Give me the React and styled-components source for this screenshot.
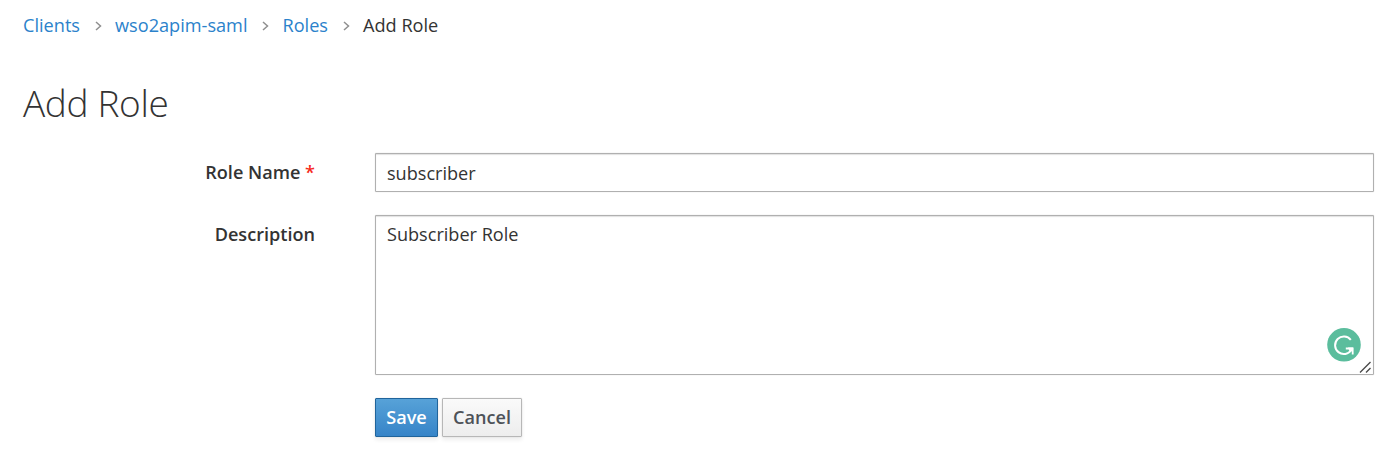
import React from 'react';
import styled, { createGlobalStyle } from 'styled-components';

const GlobalStyle = createGlobalStyle`
  * { box-sizing: border-box; }
  body { margin: 0; background: #fff; color: #333; font-family: "Open Sans", "Noto Sans", sans-serif; font-size: 18.1px; line-height: 26px; }
`;
const Page = styled.main`padding: 12px 26px 0 23px; height: 461px; overflow: hidden;`;
const Breadcrumb = styled.nav`display: flex; align-items: center; height: 26px; font-size: 18.15px; white-space: nowrap;`;
const Crumb = styled.a`color: #2b82cb; text-decoration: none;`;
const Current = styled.span`color: #333;`;
const Chevron = styled.svg`width: 7px; height: 10px; margin: 2px 13.5px 0 14.5px; flex: none;`;
const Title = styled.h1`margin: 39px 0 25px; font-size: 37px; line-height: 51px; font-weight: 300; letter-spacing: -.35px; color: #333;`;
const Row = styled.div`display: grid; grid-template-columns: 292px 999px; column-gap: 60px; margin-bottom: ${p => p.$gap || 0}px;`;
const Label = styled.label`text-align: right; font-weight: 600; padding-top: 6px;`;
const Required = styled.span`color: #f62a1d;`;
const field = `
  display: block; width: 999px; border: 1px solid #b0b0b0; border-radius: 1px; outline: 0; background: #fff;
  box-shadow: inset 0 1px 1px rgba(0,0,0,.12), 0 0 1px rgba(0,0,0,.25); font: inherit; color: #333;
`;
const Input = styled.input`${field} height: 39px; padding: 0 11px;`;
const AreaWrap = styled.div`position: relative; width: 999px;`;
const Area = styled.textarea`${field} height: 160px; padding: 5px 11px; resize: none;`;
const Badge = styled.svg`position: absolute; right: 13px; bottom: 13px; width: 34px; height: 34px;`;
const Grip = styled.svg`position: absolute; right: 2px; bottom: 2px; width: 13px; height: 12px;`;
const Actions = styled.div`display: flex; gap: 4px;`;
const Button = styled.button`
  height: 39px; width: ${p => p.$width}px; padding: 0 0 2px; border-radius: 1px; font: inherit; font-weight: 600;
  border: 1px solid ${p => p.$primary ? '#20649b' : '#b7b7b7'};
  color: ${p => p.$primary ? '#fff' : '#4d5258'};
  background: ${p => p.$primary ? 'linear-gradient(#57a2d8, #3684c8)' : 'linear-gradient(#fafafa, #ededed)'};
  box-shadow: 0 3px 4px rgba(0,0,0,.07), 0 0 1px rgba(0,0,0,.25);
`;
const Separator = () => (
  <Chevron viewBox="0 0 7 10"><path d="M1 1l4.5 4L1 9" fill="none" stroke="#8f8f8f" strokeWidth="1.5" /></Chevron>
);

export default function App() {
  return (
    <Page>
      <GlobalStyle />
      <Breadcrumb>
        <Crumb>Clients</Crumb><Separator /><Crumb>wso2apim-saml</Crumb><Separator /><Crumb>Roles</Crumb><Separator /><Current>Add Role</Current>
      </Breadcrumb>
      <Title>Add Role</Title>
      <Row $gap={23}>
        <Label htmlFor="name">Role Name <Required>*</Required></Label>
        <Input id="name" defaultValue="subscriber" />
      </Row>
      <Row $gap={23}>
        <Label htmlFor="description">Description</Label>
        <AreaWrap>
          <Area id="description" defaultValue="Subscriber Role" spellCheck={false} />
          <Badge viewBox="0 0 34 34">
            <circle cx="17" cy="16.8" r="16.8" fill="#5bbd9d" />
            <path d="M23.8 11.8A8.8 8.8 0 1 0 24.4 21.8M18.8 20.4H26" fill="none" stroke="#fff" strokeWidth="2" />
            <path d="M21 19.4H26.6V26.4H24.8V22.8L23.8 24L22.2 22.4Z" fill="#fff" />
          </Badge>
          <Grip viewBox="0 0 13 12"><path d="M1 11.5L11.5 1M7 11.5l4.5-4.5" fill="none" stroke="#4c4c4c" strokeWidth="1.4" /></Grip>
        </AreaWrap>
      </Row>
      <Row>
        <span />
        <Actions><Button $primary $width={63}>Save</Button><Button $width={80}>Cancel</Button></Actions>
      </Row>
    </Page>
  );
}
